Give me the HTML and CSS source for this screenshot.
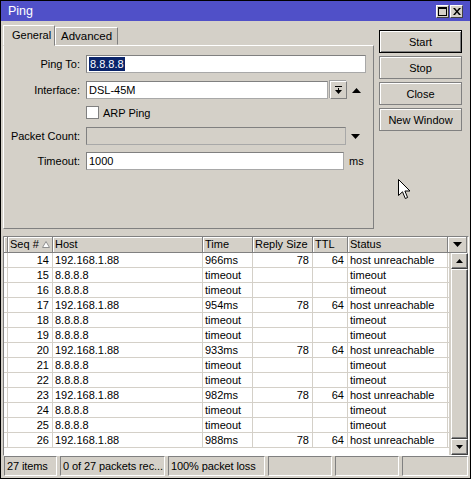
FILE: index.html
```html
<!DOCTYPE html>
<html lang="en">
<head>
  <meta charset="UTF-8">
  <title>Ping</title>
  <link rel="stylesheet" href="styles.css">
</head>
<body>
  <div class="window">
    <div class="titlebar">
      <span class="title">Ping</span>
      <div class="title-buttons">
        <span class="tbtn">
          <svg width="9" height="9" viewBox="0 0 9 9"><rect x="0.5" y="0.5" width="8" height="8" fill="none" stroke="#000"/><rect x="0" y="0" width="9" height="2" fill="#000"/></svg>
        </span>
        <span class="tbtn">
          <svg width="8" height="7" viewBox="0 0 8 7"><path d="M0 0h2l2 2.5 2-2.5h2l-3 3.5 3 3.5h-2l-2-2.5-2 2.5h-2l3-3.5z" fill="#000"/></svg>
        </span>
      </div>
    </div>

    <div class="top">
      <div class="tabbox">
        <div class="tabs">
          <div class="tab active">General</div>
          <div class="tab">Advanced</div>
        </div>
        <div class="panel">
          <div class="row row-ping">
            <span class="lbl">Ping To:</span>
            <div class="field f-ping"><span class="sel">8.8.8.8</span></div>
          </div>
          <div class="row row-iface">
            <span class="lbl">Interface:</span>
            <div class="field f-iface">DSL-45M</div>
            <span class="ddbtn">
              <svg width="7" height="8" viewBox="0 0 7 8"><rect x="0" y="0" width="7" height="1" fill="#000"/><rect x="3" y="2" width="1" height="2" fill="#000"/><path d="M0 4h7l-3.5 4z" fill="#000"/></svg>
            </span>
            <svg class="arrow" width="9" height="5" viewBox="0 0 9 5"><path d="M4.5 0L9 5H0z" fill="#000"/></svg>
          </div>
          <div class="row row-arp">
            <span class="lbl"></span>
            <span class="check"></span>
            <span class="check-label">ARP Ping</span>
          </div>
          <div class="row row-count">
            <span class="lbl">Packet Count:</span>
            <div class="field f-count disabled"></div>
            <svg class="arrow" width="9" height="5" viewBox="0 0 9 5"><path d="M0 0h9L4.5 5z" fill="#000"/></svg>
          </div>
          <div class="row row-timeout">
            <span class="lbl">Timeout:</span>
            <div class="field f-timeout">1000</div>
            <span class="unit">ms</span>
          </div>
        </div>
      </div>
      <div class="actions">
        <button class="btn default">Start</button>
        <button class="btn">Stop</button>
        <button class="btn">Close</button>
        <button class="btn">New Window</button>
      </div>
    </div>

    <div class="list">
      <div class="list-head">
        <div class="hc"></div>
        <div class="hc">Seq # <svg class="sort" width="8" height="7" viewBox="0 0 8 7"><path d="M4 0.5L7.5 6.5H0.5z" fill="#fff" stroke="#909090"/></svg></div>
        <div class="hc">Host</div>
        <div class="hc">Time</div>
        <div class="hc">Reply Size</div>
        <div class="hc">TTL</div>
        <div class="hc">Status</div>
        <div class="hc menu"><svg width="9" height="5" viewBox="0 0 9 5"><path d="M0 0h9L4.5 5z" fill="#000"/></svg></div>
      </div>
      <div class="list-body">
        <div class="rows">
          <div class="r"><i></i><span class="num">14</span><span>192.168.1.88</span><span>966ms</span><span class="num">78</span><span class="num">64</span><span>host unreachable</span></div>
          <div class="r"><i></i><span class="num">15</span><span>8.8.8.8</span><span>timeout</span><span></span><span></span><span>timeout</span></div>
          <div class="r"><i></i><span class="num">16</span><span>8.8.8.8</span><span>timeout</span><span></span><span></span><span>timeout</span></div>
          <div class="r"><i></i><span class="num">17</span><span>192.168.1.88</span><span>954ms</span><span class="num">78</span><span class="num">64</span><span>host unreachable</span></div>
          <div class="r"><i></i><span class="num">18</span><span>8.8.8.8</span><span>timeout</span><span></span><span></span><span>timeout</span></div>
          <div class="r"><i></i><span class="num">19</span><span>8.8.8.8</span><span>timeout</span><span></span><span></span><span>timeout</span></div>
          <div class="r"><i></i><span class="num">20</span><span>192.168.1.88</span><span>933ms</span><span class="num">78</span><span class="num">64</span><span>host unreachable</span></div>
          <div class="r"><i></i><span class="num">21</span><span>8.8.8.8</span><span>timeout</span><span></span><span></span><span>timeout</span></div>
          <div class="r"><i></i><span class="num">22</span><span>8.8.8.8</span><span>timeout</span><span></span><span></span><span>timeout</span></div>
          <div class="r"><i></i><span class="num">23</span><span>192.168.1.88</span><span>982ms</span><span class="num">78</span><span class="num">64</span><span>host unreachable</span></div>
          <div class="r"><i></i><span class="num">24</span><span>8.8.8.8</span><span>timeout</span><span></span><span></span><span>timeout</span></div>
          <div class="r"><i></i><span class="num">25</span><span>8.8.8.8</span><span>timeout</span><span></span><span></span><span>timeout</span></div>
          <div class="r"><i></i><span class="num">26</span><span>192.168.1.88</span><span>988ms</span><span class="num">78</span><span class="num">64</span><span>host unreachable</span></div>
        </div>
        <div class="vscroll">
          <span class="sbtn"><svg width="7" height="4" viewBox="0 0 7 4"><path d="M3.5 0L7 4H0z" fill="#000"/></svg></span>
          <span class="thumb"></span>
          <span class="sbtn"><svg width="7" height="4" viewBox="0 0 7 4"><path d="M0 0h7L3.5 4z" fill="#000"/></svg></span>
        </div>
      </div>
    </div>

    <div class="statusbar">
      <span class="seg s1">27 items</span>
      <span class="seg s2">0 of 27 packets rec...</span>
      <span class="seg s3">100% packet loss</span>
      <span class="seg s4"></span>
      <span class="seg s5"></span>
      <span class="seg s6"></span>
    </div>

    <!-- mouse pointer over the window -->
    <svg class="cursor" width="13" height="21" viewBox="0 0 13 21"><path d="M0.5 0.5V16.5L4.5 12.8L7.3 19.5L9.6 18.5L6.9 12H12z" fill="#fff" stroke="#000"/></svg>
  </div>
</body>
</html>
```

FILE: styles.css
```css
* { box-sizing: border-box; }
body {
  margin: 0;
  font: 11px "Liberation Sans", Arial, sans-serif;
  color: #000;
  background: #fff;
}
.window {
  position: relative;
  width: 471px;
  height: 479px;
  border: 1px solid #000;
  background: #d4d0c8;
  display: flex;
  flex-direction: column;
}

/* title bar */
.titlebar {
  height: 20px;
  background: #5050c8;
  color: #fff;
  display: flex;
  align-items: center;
  justify-content: space-between;
  padding: 0 7px 0 7px;
  flex: none;
}
.title { font-size: 12.5px; }
.title-buttons { display: flex; gap: 1px; margin-top: 1px; }
.tbtn {
  width: 13px;
  height: 13px;
  background: #d4d0c8;
  border: 1px solid;
  border-color: #fff #404040 #404040 #fff;
  display: flex;
  align-items: center;
  justify-content: center;
}

/* tabs + form */
.top {
  display: flex;
  padding: 4px 0 0 2px;
  flex: none;
}
.tabbox { width: 371px; }
.tabs { display: flex; align-items: flex-end; height: 20px; }
.tab {
  height: 18px;
  padding: 0 5px;
  line-height: 17px;
  font-size: 11.5px;
  border: 1px solid;
  border-color: #fff #808080 transparent #fff;
  background: #ccc8c0;
}
.tab.active {
  height: 21px;
  width: 52px;
  padding-left: 8px;
  line-height: 19px;
  font-size: 11px;
  background: #d4d0c8;
  position: relative;
  margin-bottom: -1px;
  z-index: 1;
}
.panel {
  height: 184px;
  border: 1px solid;
  border-color: #fff #808080 #808080 #fff;
  padding-top: 9px;
}
.row { display: flex; align-items: center; height: 18px; }
.row-ping { margin-bottom: 8px; }
.row-iface { margin-bottom: 7px; }
.row-arp { height: 13px; margin-bottom: 8px; }
.row-count { margin-bottom: 7px; }
.lbl {
  width: 76px;
  margin-right: 6px;
  text-align: right;
  white-space: nowrap;
}
.field {
  height: 18px;
  background: #fff;
  border: 1px solid;
  border-color: #808080 #a8a8a8 #a8a8a8 #808080;
  padding: 0 2px;
  line-height: 16px;
}
.field.disabled { background: #d4d0c8; }
.f-ping { width: 280px; }
.f-iface { width: 242px; }
.f-count { width: 260px; }
.f-timeout { width: 258px; }
.sel {
  background: #0a246a;
  color: #fff;
  padding: 1px 1px;
}
.ddbtn {
  width: 17px;
  height: 18px;
  margin-left: 2px;
  border: 1px solid;
  border-color: #fff #808080 #808080 #fff;
  box-shadow: -1px -1px 0 #a0a0a0;
  display: flex;
  align-items: center;
  justify-content: center;
}
.arrow { margin-left: 5px; }
.check {
  width: 13px;
  height: 13px;
  background: #fff;
  border: 1px solid #808080;
}
.check-label { margin-left: 4px; }
.unit { margin-left: 5px; }

/* right side buttons */
.actions {
  display: flex;
  flex-direction: column;
  gap: 3px;
  margin: 5px 0 0 5px;
}
.btn {
  width: 83px;
  height: 23px;
  font: 11px "Liberation Sans", Arial, sans-serif;
  color: #000;
  background: #d4d0c8;
  border: 1px solid #808080;
  box-shadow: inset 1px 1px #fff;
  padding: 0;
}
.btn.default {
  border-color: #000;
  box-shadow: inset 1px 1px #fff, inset -1px -1px #808080;
}

/* list */
.list {
  flex: 1;
  margin: 7px 1px 0 2px;
  border: 1px solid;
  border-color: #808080 #fff #fff #808080;
  display: flex;
  flex-direction: column;
  min-height: 0;
}
.list-head {
  display: grid;
  grid-template-columns: 4px 45px 150px 50px 60px 35px 100px 19px;
  height: 16px;
  flex: none;
}
.hc {
  border-right: 1px solid #808080;
  border-bottom: 1px solid #808080;
  box-shadow: inset 1px 1px #fff;
  padding-left: 2px;
  line-height: 15px;
  white-space: nowrap;
  display: flex;
  align-items: center;
}
.hc .sort { margin-left: 3px; }
.hc.menu { justify-content: center; padding: 0; }
.list-body {
  flex: 1;
  display: flex;
  min-height: 0;
}
.rows {
  flex: 1;
  background: #fff;
}
.r {
  display: grid;
  grid-template-columns: 4px 45px 150px 50px 60px 35px 100px;
  height: 15px;
  border-bottom: 1px solid #d4d0c8;
  line-height: 14px;
}
.r > * {
  border-right: 1px solid #d4d0c8;
  padding-left: 2px;
  white-space: nowrap;
  overflow: hidden;
}
.r > i { padding: 0; }
.r > .num { text-align: right; padding: 0 3px 0 0; }
.vscroll {
  width: 17px;
  margin-left: 2px;
  display: flex;
  flex-direction: column;
  background: #e6e3de;
}
.sbtn, .thumb {
  border: 1px solid;
  border-color: #fff #404040 #404040 #fff;
  box-shadow: inset -1px -1px #808080;
  background: #d4d0c8;
}
.sbtn {
  height: 16px;
  display: flex;
  align-items: center;
  justify-content: center;
  flex: none;
}
.thumb { flex: 1; }

/* status bar */
.statusbar {
  height: 22px;
  display: flex;
  gap: 3px;
  padding: 0 2px 2px 3px;
  align-items: flex-end;
  flex: none;
}
.seg {
  height: 20px;
  border: 1px solid;
  border-color: #808080 #fff #fff #808080;
  padding-left: 2px;
  line-height: 18px;
  letter-spacing: -0.1px;
  white-space: nowrap;
  overflow: hidden;
}
.s1 { width: 53px; }
.s2 { width: 105px; }
.s3 { width: 97px; }
.s4 { width: 64px; }
.s5 { width: 64px; }
.s6 { flex: 1; }

.cursor {
  position: absolute;
  left: 397px;
  top: 178px;
}
```
